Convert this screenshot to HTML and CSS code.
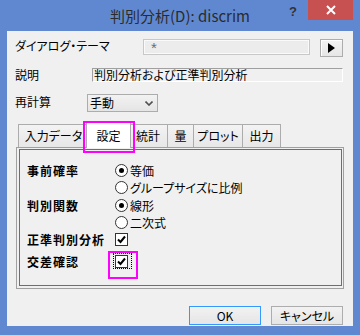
FILE: index.html
```html
<html>
<head>
<title>判別分析(D): discrim</title>
<link rel="stylesheet" href="styles.css">
</head>
<body>
<div class="window">
<div class="titlebar">
<div></div>
<div class="title">判別分析(D): discrim</div>
<div class="controls">
<span class="help">?</span>
<span class="close"><svg width="10" height="10" viewBox="0 0 10 10"><path d="M1 1 L9 9 M9 1 L1 9" stroke="#fff" stroke-width="2"/></svg></span>
</div>
</div>
<div class="client">
<div class="row row-theme">
<div class="lbl lbl-theme">ダイアログ・テーマ</div>
<div class="theme-box">*</div>
<div class="arrow-btn"><svg width="8" height="10" viewBox="0 0 8 10"><path d="M0 0 L7 5 L0 10 Z" fill="#000"/></svg></div>
</div>
<div class="row row-desc">
<div class="lbl lbl-desc">説明</div>
<div class="desc-box">判別分析および正準判別分析</div>
</div>
<div class="row row-recalc">
<div class="lbl lbl-recalc">再計算</div>
<div class="select">手動<svg class="chev" width="8" height="5" viewBox="0 0 8 5"><path d="M0.5 0.5 L4 4 L7.5 0.5" stroke="#505050" stroke-width="1.6" fill="none"/></svg></div>
</div>
<div class="tabctl">
<div class="tabs">
<div class="tab t1">入力データ</div>
<div class="tab selected">設定<span class="mark mark-tab"></span></div>
<div class="tab t3">統計</div>
<div class="tab t4">量</div>
<div class="tab t5">プロット</div>
<div class="tab t6">出力</div>
</div>
<div class="panel">
<div class="inner">
<div class="settings">
<div class="slbl">事前確率</div>
<div class="opt"><span class="radio on"></span>等価</div>
<div></div>
<div class="opt"><span class="radio"></span>グループサイズに比例</div>
<div class="slbl">判別関数</div>
<div class="opt"><span class="radio on"></span>線形</div>
<div></div>
<div class="opt"><span class="radio"></span>二次式</div>
<div class="slbl">正準判別分析</div>
<div class="opt"><span class="check"><svg width="11" height="11" viewBox="0 0 11 11"><path d="M2 5.5 L4.5 8 L9 2.5" stroke="#000" stroke-width="2" fill="none"/></svg></span></div>
<div class="slbl">交差確認</div>
<div class="opt"><span class="check focused"><svg width="11" height="11" viewBox="0 0 11 11"><path d="M2 5.5 L4.5 8 L9 2.5" stroke="#000" stroke-width="2" fill="none"/></svg><span class="focus"></span><span class="mark mark-check"></span></span></div>
</div>
</div>
</div>
</div>
<div class="buttons">
<div class="btn default">OK</div>
<div class="btn">キャンセル</div>
</div>
</div>
</div>
</body>
</html>
```

FILE: styles.css
```css
body {
margin: 0;
font-family: "Noto Sans CJK JP", sans-serif;
font-size: 12px;
font-feature-settings: "palt";
color: #000;
background-color: #6088d0;
}
.window {
width: 360px; height: 335px;
background-color: #6088d0;
display: flex; flex-direction: column;
overflow: hidden;
}
.titlebar {
height: 31px;
display: grid;
grid-template-columns: 1fr auto 1fr;
}
.title {
font-size: 15px; line-height: 31px;
color: #2b2b2b;
}
.controls {
display: flex; justify-content: flex-end; align-items: flex-start;
padding-right: 7px;
}
.help {
font-family: "Liberation Sans", sans-serif; font-weight: bold; font-size: 13px;
color: #333; line-height: 13px;
margin: 5px 11px 0 0;
}
.close {
width: 45px; height: 20px;
background-color: #c75050;
display: flex; align-items: center; justify-content: center;
}
.client {
flex: 1;
margin: 0 7px 9px;
background-color: #f0f0f0;
padding: 8px 10px 0 8px;
}
.row {
display: flex;
align-items: flex-start;
}
.lbl { line-height: 13px; }
.lbl-theme { width: 128px; }
.theme-box {
width: 167px; height: 16px;
box-sizing: border-box;
border: 1px solid #c8c8c8;
box-shadow: inset 0 0 0 1px #fafafa;
background-color: #ececec;
color: #6d6d6d;
font-family: "Liberation Sans", sans-serif; font-size: 15px;
line-height: 16px; padding-left: 7px;
}
.arrow-btn {
width: 23px; height: 18px;
margin-left: 10px;
box-sizing: border-box;
border: 1px solid #adadad;
box-shadow: inset 1px 1px 0 #fff;
background: linear-gradient(#f4f4f4, #e6e6e6);
display: flex; align-items: center; justify-content: center;
}
.row-desc { margin-top: 11px; }
.lbl-desc { width: 77px; line-height: 12px; margin-top: 1px; }
.desc-box {
flex: 1; height: 14px;
box-sizing: border-box;
border-top: 1px solid #a0a0a0; border-left: 1px solid #a0a0a0;
border-right: 1px solid #fff; border-bottom: 1px solid #fff;
line-height: 12px; padding-left: 1px;
white-space: nowrap;
}
.row-recalc { margin-top: 12px; }
.lbl-recalc { width: 72px; line-height: 16px; }
.select {
width: 71px; height: 18px;
box-sizing: border-box;
border: 1px solid #acacac;
background: linear-gradient(#f2f2f2, #e5e5e5);
line-height: 16px; padding-left: 2px;
display: flex; align-items: center;
}
.chev { margin-left: auto; margin-right: 4px; margin-top: 1px; }
.tabctl { margin: 10px -1px 0 1px; }
.tabs {
display: flex; align-items: flex-end;
height: 25px;
padding-left: 2px;
}
.tab {
height: 23px;
box-sizing: border-box;
border: 1px solid #acacac; border-bottom: none;
background: linear-gradient(#f3f3f3, #e7e7e7);
margin-left: -1px;
text-align: center; line-height: 22px;
white-space: nowrap;
}
.t1 { width: 71px; margin-left: 0; }
.t3 { width: 40px; }
.t4 { width: 27px; }
.t5 { width: 50px; }
.t6 { width: 39px; }
.tab.selected {
position: relative; z-index: 1;
width: 45px; height: 26px;
margin: 0 -2px -1px -3px;
background: #fff;
line-height: 26px;
}
.mark {
position: absolute;
border: 2px solid #ff00ff;
box-sizing: border-box;
}
.mark-tab { left: -4px; top: -2px; width: 52px; height: 32px; }
.panel {
border: 1px solid #a0a0a0;
padding: 1px 1px 2px 2px;
}
.inner {
height: 137px;
box-sizing: border-box;
border: 1px solid #6e6e6e;
padding: 12px 0 0 7px;
}
.settings {
display: grid;
grid-template-columns: 88px auto;
grid-template-rows: 17px 18px 17px 17px 22px 17px;
align-items: start;
}
.slbl {
font-weight: bold; letter-spacing: 1px;
line-height: 17px;
}
.opt {
display: flex; align-items: center;
height: 17px;
}
.radio {
width: 13px; height: 13px;
box-sizing: border-box;
border: 1px solid #333;
border-radius: 50%;
background: #fff;
margin-right: 2px;
display: flex; align-items: center; justify-content: center;
}
.radio.on::after {
content: "";
width: 5px; height: 5px;
border-radius: 50%;
background: #000;
}
.check {
position: relative;
width: 13px; height: 13px;
box-sizing: border-box;
border: 1px solid #333;
background: #fff;
display: flex; align-items: center; justify-content: center;
}
.focus {
position: absolute;
left: -3px; top: -3px; width: 19px; height: 16px;
border: 1px dotted #000;
box-sizing: border-box;
}
.mark-check { left: -8px; top: -5px; width: 30px; height: 28px; }
.buttons {
display: flex; justify-content: flex-end;
gap: 10px;
margin-top: 17px;
}
.btn {
width: 72px; height: 19px;
box-sizing: border-box;
border: 1px solid #adadad;
background: linear-gradient(#f2f2f2, #e5e5e5);
text-align: center; line-height: 17px;
}
.btn.default { border-color: #3399ff; }
```
